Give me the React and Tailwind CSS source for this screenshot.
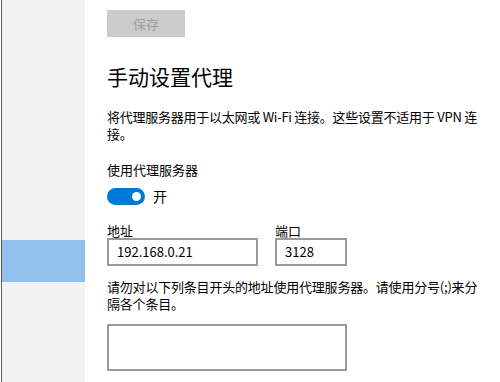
export default function App() {
  return (
    <div
      className="flex w-[500px] h-[382px] overflow-hidden bg-white text-black"
      style={{ fontFamily: '"Noto Sans CJK SC", "Noto Sans", sans-serif' }}
    >
      <div className="ml-px w-[84px] shrink-0 border-l border-[#5a5a5a] bg-[#f2f2f2] flex flex-col">
        <div className="mt-[240px] h-[42px] bg-[#91c1ea]" />
      </div>
      <div className="flex-1 pl-[22px] flex flex-col items-start">
        <div className="mt-[10px] w-[78px] h-[27px] bg-[#cccccc] text-[#a0a0a0] text-[13px] flex items-center justify-center">
          保存
        </div>
        <div className="mt-[25px] text-[21px] leading-[28px]">手动设置代理</div>
        <div className="mt-[18px] text-[13px] leading-[17px] whitespace-nowrap tracking-[-0.25px]">
          将代理服务器用于以太网或 Wi-Fi 连接。这些设置不适用于 VPN 连
          <br />
          接。
        </div>
        <div className="mt-[19px] text-[13px] leading-[17px]">使用代理服务器</div>
        <div className="mt-[10px] flex items-center gap-[8px]">
          <div className="w-[38px] h-[17px] rounded-full bg-[#0078d7] flex items-center justify-end pr-[4px]">
            <div className="w-[9px] h-[9px] rounded-full bg-white" />
          </div>
          <span className="text-[14px] leading-[17px]">开</span>
        </div>
        <div className="mt-[18px] flex gap-[17px]">
          <div className="flex flex-col">
            <div className="h-[15px] text-[13px] leading-[15px]">地址</div>
            <div className="w-[151px] h-[28px] border-2 border-[#999999] flex items-center pl-[8px] text-[13px]">
              192.168.0.21
            </div>
          </div>
          <div className="flex flex-col">
            <div className="h-[15px] text-[13px] leading-[15px]">端口</div>
            <div className="w-[72px] h-[28px] border-2 border-[#999999] flex items-center pl-[8px] text-[13px]">
              3128
            </div>
          </div>
        </div>
        <div className="mt-[12px] text-[13px] leading-[17px] whitespace-nowrap tracking-[-0.2px]">
          请勿对以下列条目开头的地址使用代理服务器。请使用分号(;)来分
          <br />
          隔各个条目。
        </div>
        <div className="mt-[12px] w-[240px] h-[47px] border-2 border-[#999999]" />
      </div>
    </div>
  );
}
